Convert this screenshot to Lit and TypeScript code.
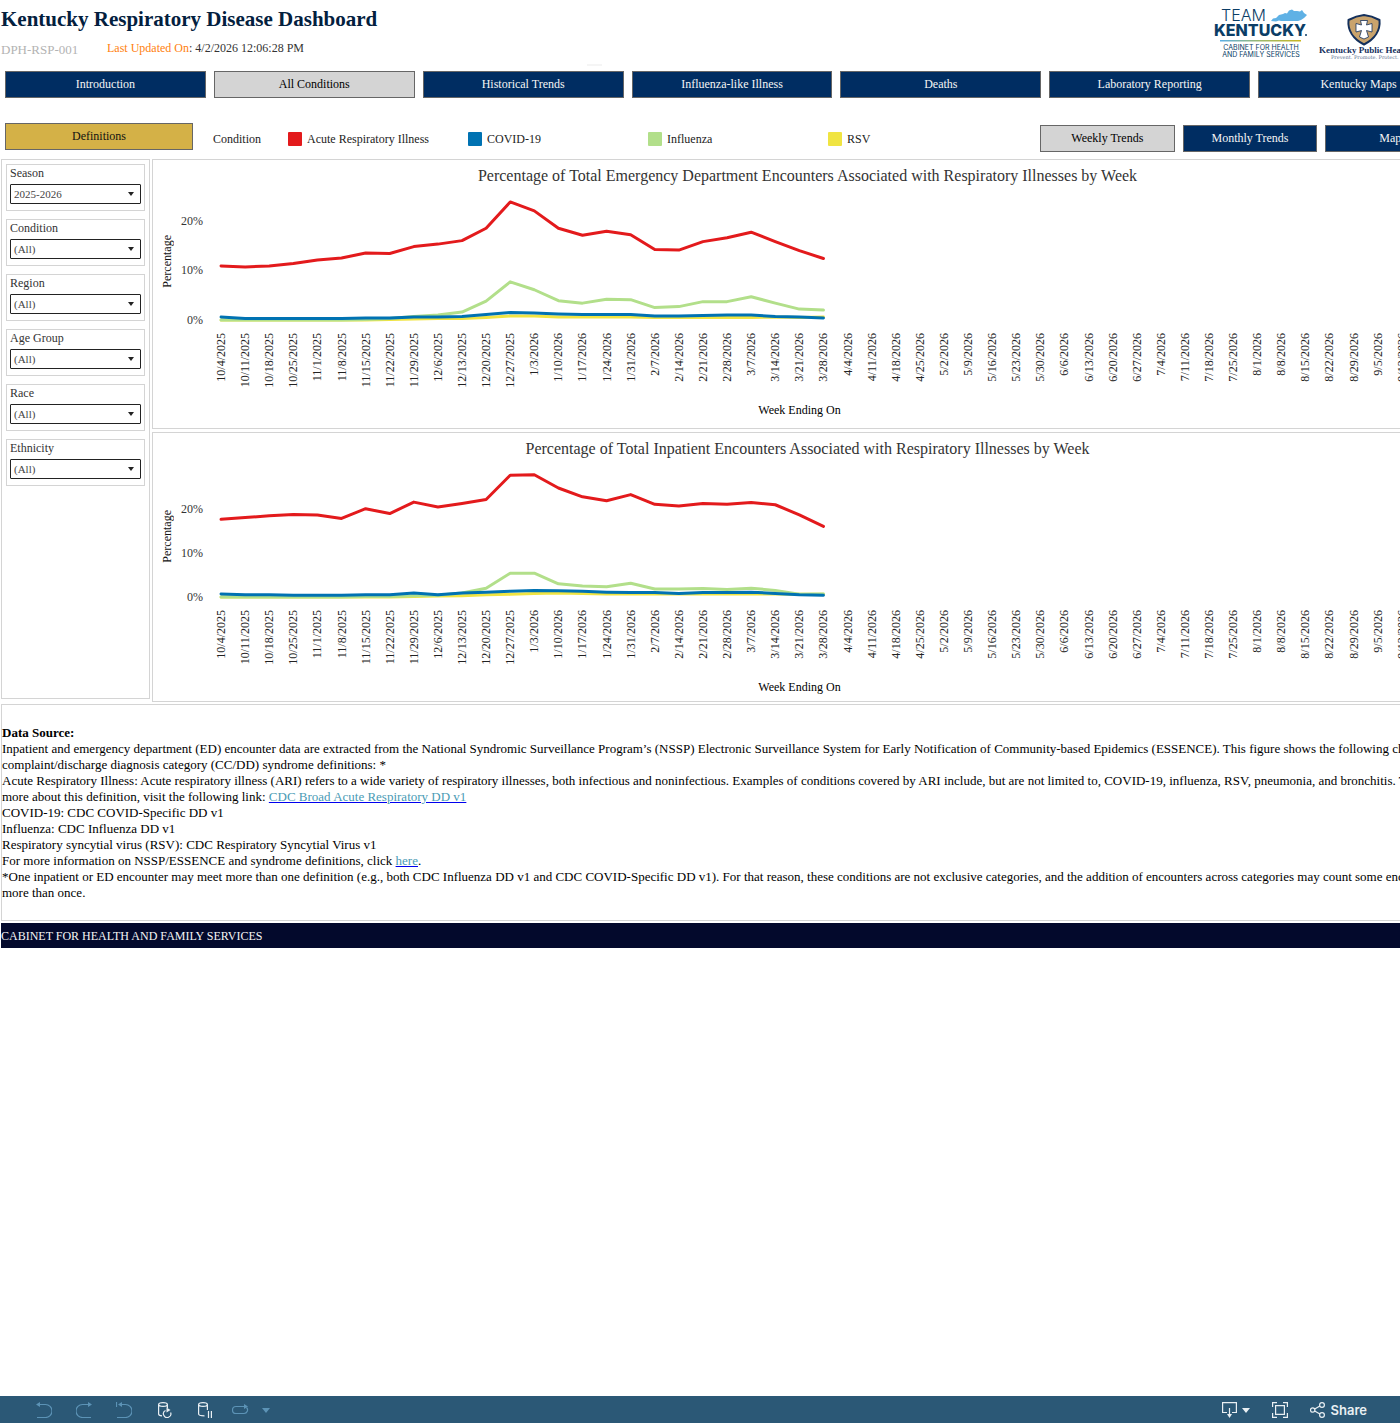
import { LitElement, html, svg, css } from "lit";

interface Series {
  name: string;
  color: string;
  values: number[];
}

const COLORS = {
  ari: "#e31a1c",
  covid: "#0072b2",
  flu: "#b2df8a",
  rsv: "#f0e442",
};

const WEEKS = 52;
const FIRST_WEEK = Date.UTC(2025, 9, 4);
const weekLabels = Array.from({ length: WEEKS }, (_, i) => {
  const d = new Date(FIRST_WEEK + i * 7 * 86400000);
  return `${d.getUTCMonth() + 1}/${d.getUTCDate()}/${d.getUTCFullYear()}`;
});

// Drawn in this order, so the last series lies on top.
const edSeries: Series[] = [
  { name: "RSV", color: COLORS.rsv, values: [0, 0, 0, 0, 0, 0, 0, 0.1, 0.2, 0.3, 0.3, 0.5, 0.8, 0.8, 0.6, 0.6, 0.6, 0.6, 0.5, 0.5, 0.5, 0.5, 0.5, 0.6, 0.5, 0.6] },
  { name: "Influenza", color: COLORS.flu, values: [0, 0, 0, 0, 0, 0, 0.1, 0.3, 0.7, 1, 1.6, 3.8, 7.7, 6.1, 3.9, 3.4, 4.2, 4.1, 2.5, 2.7, 3.7, 3.7, 4.7, 3.4, 2.2, 2] },
  { name: "COVID-19", color: COLORS.covid, values: [0.6, 0.3, 0.3, 0.3, 0.3, 0.3, 0.4, 0.4, 0.6, 0.6, 0.7, 1.1, 1.5, 1.4, 1.2, 1.1, 1.1, 1.1, 0.8, 0.8, 0.9, 1, 1, 0.7, 0.6, 0.4] },
  { name: "Acute Respiratory Illness", color: COLORS.ari, values: [10.9, 10.7, 10.9, 11.4, 12.1, 12.5, 13.5, 13.4, 14.8, 15.3, 16, 18.5, 23.8, 22, 18.5, 17.1, 17.9, 17.2, 14.2, 14.1, 15.8, 16.6, 17.7, 15.8, 14, 12.4] },
];

const inpatientSeries: Series[] = [
  { name: "RSV", color: COLORS.rsv, values: [0, 0, 0, 0, 0, 0, 0, 0, 0.1, 0.2, 0.3, 0.5, 0.6, 0.8, 0.9, 0.8, 0.7, 0.7, 0.7, 0.7, 0.7, 0.7, 0.7, 0.7, 0.6, 0.6] },
  { name: "Influenza", color: COLORS.flu, values: [0, 0, 0, 0, 0, 0, 0.1, 0.1, 0.3, 0.4, 0.9, 2, 5.4, 5.4, 3, 2.5, 2.3, 3.1, 1.8, 1.8, 1.9, 1.7, 2, 1.5, 0.6, 0.7] },
  { name: "COVID-19", color: COLORS.covid, values: [0.7, 0.5, 0.5, 0.4, 0.4, 0.4, 0.5, 0.5, 0.9, 0.5, 0.9, 1.1, 1.3, 1.5, 1.4, 1.3, 1.1, 1, 1, 0.8, 1, 1, 1.1, 0.8, 0.5, 0.4] },
  { name: "Acute Respiratory Illness", color: COLORS.ari, values: [17.6, 18, 18.4, 18.7, 18.6, 17.8, 20, 18.9, 21.5, 20.4, 21.2, 22.1, 27.6, 27.7, 24.7, 22.7, 21.8, 23.2, 21, 20.6, 21.2, 21, 21.4, 20.9, 18.6, 16] },
];

class TrendChart extends LitElement {
  static properties = {
    heading: {},
    series: { attribute: false },
    max: { type: Number },
    tall: { type: Boolean, reflect: true },
  };
  declare heading: string;
  declare series: Series[];
  declare max: number;
  declare tall: boolean;

  static styles = css`
    :host {
      display: block;
      box-sizing: border-box;
      min-height: 270px;
      border: 1px solid #d4d4d4;
      color: #333;
      font-size: 12px;
      --plot-height: 124px;
    }
    :host([tall]) {
      --plot-height: 128px;
    }
    h2 {
      margin: 0;
      padding-top: 6px;
      font-size: 16px;
      line-height: 20px;
      font-weight: 400;
      text-align: center;
    }
    .body {
      display: grid;
      grid-template-columns: 28px 22px minmax(0, 1fr);
      grid-template-rows: var(--plot-height) auto;
      padding: 10px 0 0;
    }
    .axis-title {
      display: flex;
      align-items: center;
      justify-content: center;
      padding-top: 7px;
      color: #111;
    }
    .vertical {
      writing-mode: vertical-rl;
      transform: rotate(180deg);
      line-height: 14px;
      white-space: nowrap;
    }
    .ticks {
      display: flex;
      flex-direction: column-reverse;
      height: var(--plot-height);
    }
    .tick {
      flex: none;
      display: flex;
      align-items: flex-start;
      justify-content: flex-end;
      line-height: 0;
    }
    .tick.zero {
      height: 0;
    }
    .plot {
      padding-left: 6px;
    }
    .plot svg {
      display: block;
      width: 100%;
      height: var(--plot-height);
      overflow: visible;
    }
    polyline {
      fill: none;
      stroke-width: 3px;
      stroke-linejoin: round;
      stroke-linecap: round;
      vector-effect: non-scaling-stroke;
    }
    .weeks {
      grid-column: 3;
      display: grid;
      grid-auto-flow: column;
      grid-auto-columns: minmax(0, 1fr);
      padding: 13px 0 0 6px;
      height: 56px;
      color: #222;
    }
    .week {
      display: flex;
      justify-content: center;
      align-items: flex-start;
    }
    .x-title {
      padding: 13px 16px 6px 0;
      line-height: 16px;
      text-align: center;
      color: #000;
    }
  `;

  render() {
    const line = (s: Series) =>
      s.values
        .map((v, i) => `${i + 0.5},${(100 * (1 - v / this.max)).toFixed(2)}`)
        .join(" ");
    return html`
      <h2>${this.heading}</h2>
      <div class="body">
        <div class="axis-title"><span class="vertical">Percentage</span></div>
        <div class="ticks">
          <div class="tick zero"><span>0%</span></div>
          ${[10, 20].map(
            (t) => html`<div class="tick" style="height:${(1000 / this.max).toFixed(2)}%"><span>${t}%</span></div>`
          )}
        </div>
        <div class="plot">
          <svg viewBox="0 0 ${WEEKS} 100" preserveAspectRatio="none" role="img" aria-label=${this.heading}>
            ${this.series.map((s) => svg`<polyline points=${line(s)} stroke=${s.color}></polyline>`)}
          </svg>
        </div>
        <div class="weeks">
          ${weekLabels.map((w) => html`<div class="week"><span class="vertical">${w}</span></div>`)}
        </div>
      </div>
      <div class="x-title">Week Ending On</div>
    `;
  }
}
customElements.define("trend-chart", TrendChart);

const pages = ["Introduction", "All Conditions", "Historical Trends", "Influenza-like Illness", "Deaths", "Laboratory Reporting", "Kentucky Maps"];
const views = ["Weekly Trends", "Monthly Trends", "Maps"];
const legend = [
  { label: "Acute Respiratory Illness", cls: "ari" },
  { label: "COVID-19", cls: "covid" },
  { label: "Influenza", cls: "flu" },
  { label: "RSV", cls: "rsv" },
];
const filters = [
  { id: "season", label: "Season", value: "2025-2026" },
  { id: "condition", label: "Condition", value: "(All)" },
  { id: "region", label: "Region", value: "(All)" },
  { id: "age", label: "Age Group", value: "(All)" },
  { id: "race", label: "Race", value: "(All)" },
  { id: "ethnicity", label: "Ethnicity", value: "(All)" },
];

const teamLogo = html`<svg class="logo" width="96" height="50" viewBox="0 0 96 50" role="img" aria-label="Team Kentucky">
  <defs>
    <linearGradient id="rule" x1="0" x2="1" y1="0" y2="0">
      <stop offset="0" stop-color="#5aaee6" />
      <stop offset="0.5" stop-color="#9db96a" />
      <stop offset="1" stop-color="#c9b520" />
    </linearGradient>
  </defs>
  <path fill="#5fb1e5" d="M57 13 L59 10.500 L62 10 L65 7 L69 6 L71 5 L73 5.500 L75 2.500 L78 1.500 L80 3 L83 3 L86 3.500 L88 2 L90 5 L93 7 L90 10 L87 12 L84 13 L67 13 L65 12.500 L62 13.500 Z" />
  <text class="logo-team" x="7" y="13">TEAM</text>
  <text class="logo-kentucky" x="0" y="28">KENTUCKY</text>
  <circle cx="92" cy="27" r="1" fill="#0b3d66" />
  <rect x="6" y="32" width="81" height="1.500" fill="url(#rule)" />
  <text class="logo-small" x="47" y="42" text-anchor="middle">CABINET FOR HEALTH</text>
  <text class="logo-small" x="47" y="49" text-anchor="middle">AND FAMILY SERVICES</text>
</svg>`;

const healthLogo = html`<svg class="logo" width="120" height="50" viewBox="0 0 120 50" role="img" aria-label="Kentucky Public Health">
  <path fill="#c9a36c" stroke="#14305c" stroke-width="2" stroke-linejoin="round" d="M46 7 C51 7.500 56 9 61.500 12 C62.500 22 57 31 46 36.500 C35 31 29.500 22 30.500 12 C36 9 41 7.500 46 7 Z" />
  <path fill="#fff" stroke="#14305c" stroke-width="0.800" d="M42.500 12.500 L49.500 12.500 L48.500 17 L54 15.500 L54 24 L48.500 22.500 L50.500 29 L46 31 L41.500 29 L43.500 22.500 L38 24 L38 15.500 L43.500 17 Z" />
  <text class="logo-kph" x="1" y="45">Kentucky Public Health</text>
  <text class="logo-motto" x="13" y="51">Prevent. Promote. Protect.</text>
</svg>`;

class AppRoot extends LitElement {
  static styles = css`
    :host {
      display: flex;
      flex-direction: column;
      min-height: 100vh;
      overflow: hidden;
      background: #fff;
      color: #333;
      font: 12px/16px "Liberation Serif", "Times New Roman", serif;
    }
    button,
    select {
      font: inherit;
      border-radius: 0;
      margin: 0;
    }
    /* The dashboard is a little wider than the window and is clipped by it. */
    .dashboard {
      box-sizing: border-box;
      width: calc(100% + 64px);
      padding: 0 1px;
    }
    header {
      display: flex;
      height: 71px;
    }
    h1 {
      margin: 0;
      padding-top: 7px;
      font-size: 21px;
      line-height: 24px;
      color: #03203e;
    }
    .meta {
      display: flex;
      padding-top: 9px;
    }
    .code {
      width: 106px;
      padding-top: 2px;
      font-size: 13px;
      color: #b3b3b3;
    }
    .updated em {
      font-style: normal;
      color: #ff7f0e;
    }
    .grip {
      align-self: flex-end;
      width: 15px;
      height: 2px;
      margin: 0 auto 5px 210px;
      background: #f5f5f5;
    }
    .logos {
      display: flex;
      gap: 8px;
      padding: 8px 25px 0 0;
    }
    .logo {
      display: block;
      overflow: visible;
    }
    .logo text {
      fill: #0b3d66;
    }
    .logo-team {
      font: 300 16px Inter, sans-serif;
    }
    .logo-kentucky {
      font: 800 16px Inter, sans-serif;
    }
    .logo-small {
      font: 400 7px Inter, sans-serif;
    }
    .logo .logo-kph {
      font: 700 9px "Liberation Serif", serif;
      fill: #14305c;
    }
    .logo .logo-motto {
      font: 400 5px "DejaVu Serif", serif;
      fill: #5b6f90;
    }
    .tab {
      box-sizing: border-box;
      height: 27px;
      padding: 0 0 1px;
      border: 1px solid #666;
      background: #002d62;
      color: #f5f5f5;
      text-align: center;
    }
    .tab.current {
      background: #d4d4d4;
      color: #000;
    }
    .tab.gold {
      width: 188px;
      background: #d4b147;
      color: #111;
    }
    .pages {
      display: grid;
      grid-template-columns: repeat(7, minmax(0, 1fr));
      gap: 8px;
      padding: 0 4px;
    }
    .controls {
      display: flex;
      align-items: flex-start;
      padding: 25px 3px 7px 4px;
    }
    .legend {
      display: flex;
      align-items: center;
      padding: 8px 0 0 20px;
      margin-right: auto;
      color: #222;
    }
    .legend-title {
      width: 75px;
    }
    .entry {
      display: flex;
      align-items: center;
      gap: 5px;
      width: 180px;
    }
    .swatch {
      width: 14px;
      height: 14px;
      border-radius: 1px;
    }
    .ari {
      background: #e31a1c;
    }
    .covid {
      background: #0072b2;
    }
    .flu {
      background: #b2df8a;
    }
    .rsv {
      background: #f0e442;
    }
    .views {
      display: grid;
      grid-template-columns: repeat(3, 1fr);
      gap: 8px;
      flex: 0 0 420px;
      padding-top: 2px;
    }
    .main {
      display: grid;
      grid-template-columns: 149px minmax(0, 1fr);
      gap: 2px;
    }
    .filters {
      display: flex;
      flex-direction: column;
      gap: 8px;
      margin-bottom: 3px;
      padding: 4px;
      border: 1px solid #d4d4d4;
    }
    .filter {
      display: flex;
      flex-direction: column;
      box-sizing: border-box;
      height: 47px;
      padding: 0 3px;
      border: 1px solid #d4d4d4;
    }
    .filter label {
      line-height: 17px;
      padding-bottom: 2px;
    }
    .picker {
      display: grid;
      align-items: center;
    }
    .picker > * {
      grid-area: 1 / 1;
    }
    .picker select {
      appearance: none;
      box-sizing: border-box;
      width: 100%;
      height: 20px;
      padding: 0 3px;
      border: 1px solid #222;
      border-radius: 1px;
      background: #fff;
      color: #444;
      font-size: 11px;
    }
    .picker svg {
      justify-self: end;
      margin-right: 7px;
      pointer-events: none;
    }
    .charts {
      display: flex;
      flex-direction: column;
      gap: 3px;
    }
    .source {
      margin-top: 2px;
      padding: 20px 0 19px;
      border: 1px solid #d4d4d4;
      border-right: 0;
      color: #000;
      font-size: 13px;
      line-height: 16px;
    }
    .source p {
      margin: 0;
    }
    .source a {
      color: #4a9bb5;
      text-decoration: underline #0000ee;
    }
    footer {
      margin-top: 2px;
      padding: 5px 0 4px;
      background: #03092c;
      color: #f5f5f5;
    }
    .toolbar {
      display: flex;
      justify-content: space-between;
      height: 27px;
      margin-top: auto;
      padding: 0 25px 0 24px;
      background: #2b5876;
    }
    .group {
      display: flex;
    }
    .group.end {
      gap: 2px;
    }
    .tool {
      display: flex;
      align-items: center;
      justify-content: center;
      gap: 6px;
      min-width: 40px;
      padding: 0 8px;
      border: 0;
      background: none;
      color: #e9eff3;
      font: 600 13px/16px Inter, sans-serif;
    }
    .tool:disabled {
      color: #5c93b6;
    }
    .tool svg {
      display: block;
      flex: none;
      fill: none;
      stroke: currentColor;
      stroke-width: 1.2;
    }
    .tool .solid {
      fill: currentColor;
      stroke: none;
    }
  `;

  render() {
    return html`
      <div class="dashboard">
        <header>
          <div>
            <h1>Kentucky Respiratory Disease Dashboard</h1>
            <div class="meta">
              <span class="code">DPH-RSP-001</span>
              <span class="updated"><em>Last Updated On</em>: 4/2/2026 12:06:28 PM</span>
            </div>
          </div>
          <div class="grip"></div>
          <div class="logos">${teamLogo}${healthLogo}</div>
        </header>

        <nav class="pages" aria-label="Pages">
          ${pages.map((p, i) => html`<button class="tab ${i === 1 ? "current" : ""}">${p}</button>`)}
        </nav>

        <div class="controls">
          <button class="tab gold">Definitions</button>
          <div class="legend">
            <span class="legend-title">Condition</span>
            ${legend.map((l) => html`<span class="entry"><i class="swatch ${l.cls}"></i>${l.label}</span>`)}
          </div>
          <nav class="views" aria-label="Views">
            ${views.map((v, i) => html`<button class="tab ${i === 0 ? "current" : ""}">${v}</button>`)}
          </nav>
        </div>

        <div class="main">
          <div class="filters">
            ${filters.map(
              (f) => html`<div class="filter">
                <label for=${f.id}>${f.label}</label>
                <div class="picker">
                  <select id=${f.id}>
                    <option>${f.value}</option>
                  </select>
                  <svg width="6" height="4" viewBox="0 0 6 4"><path fill="#222" d="M0 0h6L3 4z" /></svg>
                </div>
              </div>`
            )}
          </div>
          <div class="charts">
            <trend-chart
              heading="Percentage of Total Emergency Department Encounters Associated with Respiratory Illnesses by Week"
              .series=${edSeries}
              .max=${25}
            ></trend-chart>
            <trend-chart
              tall
              heading="Percentage of Total Inpatient Encounters Associated with Respiratory Illnesses by Week"
              .series=${inpatientSeries}
              .max=${29}
            ></trend-chart>
          </div>
        </div>

        <section class="source">
          <p><b>Data Source:</b></p>
          <p>Inpatient and emergency department (ED) encounter data are extracted from the National Syndromic Surveillance Program’s (NSSP) Electronic Surveillance System for Early Notification of Community-based Epidemics (ESSENCE). This figure shows the following chief complaint/discharge diagnosis category (CC/DD) syndrome definitions: *</p>
          <p>Acute Respiratory Illness: Acute respiratory illness (ARI) refers to a wide variety of respiratory illnesses, both infectious and noninfectious. Examples of conditions covered by ARI include, but are not limited to, COVID-19, influenza, RSV, pneumonia, and bronchitis. To learn more about this definition, visit the following link: <a href="#ari">CDC Broad Acute Respiratory DD v1</a></p>
          <p>COVID-19: CDC COVID-Specific DD v1</p>
          <p>Influenza: CDC Influenza DD v1</p>
          <p>Respiratory syncytial virus (RSV): CDC Respiratory Syncytial Virus v1</p>
          <p>For more information on NSSP/ESSENCE and syndrome definitions, click <a href="#nssp">here</a>.</p>
          <p>*One inpatient or ED encounter may meet more than one definition (e.g., both CDC Influenza DD v1 and CDC COVID-Specific DD v1). For that reason, these conditions are not exclusive categories, and the addition of encounters across categories may count some encounters more than once.</p>
        </section>

        <footer>CABINET FOR HEALTH AND FAMILY SERVICES</footer>
      </div>

      <div class="toolbar" role="toolbar" aria-label="View toolbar">
        <div class="group">
          <button class="tool" disabled aria-label="Undo">
            <svg width="16" height="16" viewBox="0 0 16 16"><path d="M1 2.500H9.500A6.500 6.500 0 0 1 9.500 15.500H1" /><path class="solid" d="M0 2.500L4 0V5z" /></svg>
          </button>
          <button class="tool" disabled aria-label="Redo">
            <svg width="16" height="16" viewBox="0 0 16 16"><path d="M15 2.500H6.500A6.500 6.500 0 0 0 6.500 15.500H15" /><path class="solid" d="M16 2.500L12 0V5z" /></svg>
          </button>
          <button class="tool" disabled aria-label="Revert">
            <svg width="16" height="16" viewBox="0 0 16 16"><path d="M3 2.500H9.500A6.500 6.500 0 0 1 9.500 15.500H1M0.500 0V5" /><path class="solid" d="M2 2.500L6 0V5z" /></svg>
          </button>
          <button class="tool" aria-label="Refresh data">
            <svg width="16" height="16" viewBox="-2 0 16 16"><ellipse cx="5" cy="2.500" rx="4.400" ry="1.900" /><path d="M0.600 2.500V12C0.600 13 2 13.700 4 13.800M9.400 2.500V6" /><path d="M7.500 8.500A3.700 3.700 0 1 0 12.600 10.500" /><path class="solid" d="M8.500 5.500L12.500 8L8.500 10.500z" /></svg>
          </button>
          <button class="tool" aria-label="Pause updates">
            <svg width="16" height="16" viewBox="-2 0 16 16"><ellipse cx="5" cy="2.500" rx="4.400" ry="1.900" /><path d="M0.600 2.500V12C0.600 13 3 13.800 6.500 13.800M9.400 2.500V8M10.500 9V16M13.400 9V16" /></svg>
          </button>
          <button class="tool" disabled aria-label="Replay">
            <svg width="38" height="16" viewBox="0 0 38 16"><path d="M13 4.500H4A3.500 3.500 0 0 0 4 11.500H12A3.500 3.500 0 0 0 14.500 5.500" /><path class="solid" d="M12 2L16 4.500L12 7zM30 6H38L34 11z" /></svg>
          </button>
        </div>
        <div class="group end">
          <button class="tool" aria-label="Download">
            <svg width="28" height="16" viewBox="0 0 28 16"><path d="M5 10.500H0.600V0.600H14.400V10.500H10M7.500 6V13" /><path class="solid" d="M5 12H10L7.500 16zM20 6H28L24 11z" /></svg>
          </button>
          <button class="tool" aria-label="Full screen">
            <svg width="16" height="16" viewBox="0 0 16 16"><path d="M0.600 5V0.600H5M11 0.600H15.400V5M15.400 11V15.400H11M5 15.400H0.600V11M3.600 3.600H12.400V12.400H3.600z" /></svg>
          </button>
          <button class="tool">
            <svg width="15" height="16" viewBox="0 0 15 16"><circle cx="2.700" cy="8" r="2.200" /><circle cx="12" cy="3" r="2.400" /><circle cx="12" cy="13" r="2.400" /><path d="M4.700 7L9.900 4.100M4.700 9L9.900 11.900" /></svg>
            Share
          </button>
        </div>
      </div>
    `;
  }
}
customElements.define("app-root", AppRoot);
